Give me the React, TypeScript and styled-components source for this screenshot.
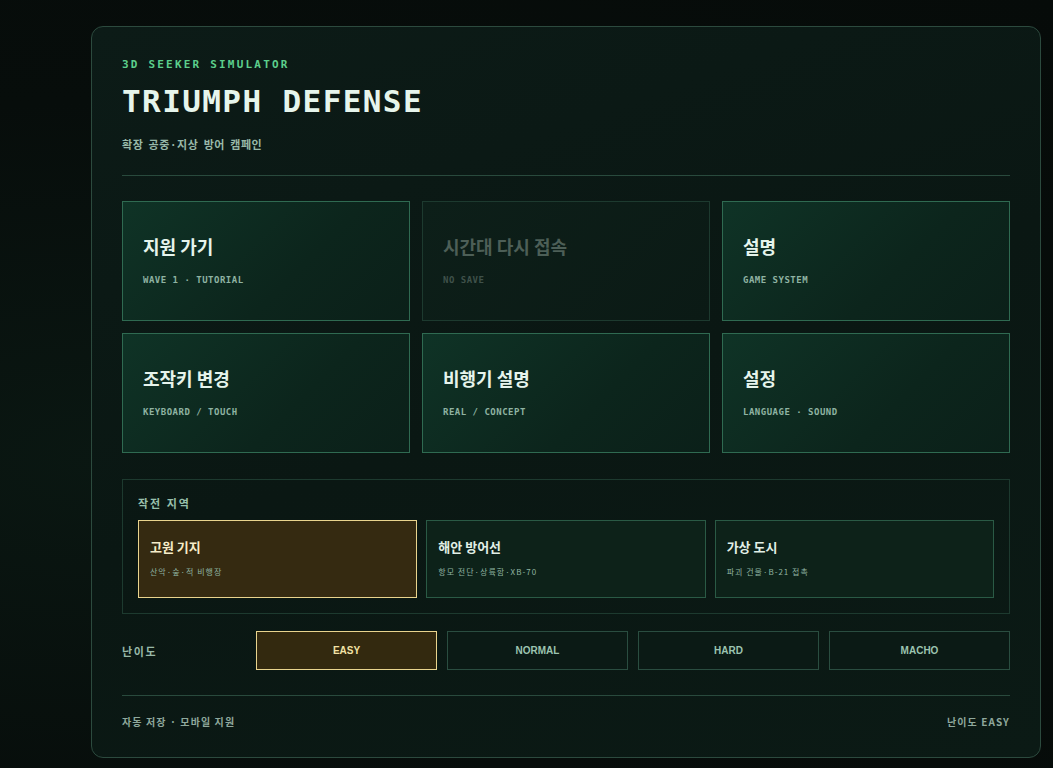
import React from "react";
import styled, { createGlobalStyle } from "styled-components";

const Global = createGlobalStyle`
  html, body { margin: 0; padding: 0; }
  body {
    background: radial-gradient(ellipse at 10% 60%, #0a1712 0%, #070d0b 55%, #060b09 100%);
    min-height: 768px;
    font-family: "Noto Sans CJK KR", "Noto Sans", sans-serif;
  }
`;

const Page = styled.div`
  padding: 26px 12px 10px 91px;
  box-sizing: border-box;
  min-height: 768px;
`;

const Panel = styled.div`
  width: 950px;
  height: 732px;
  box-sizing: border-box;
  border: 1px solid #2c4a3e;
  border-radius: 12px;
  background: linear-gradient(160deg, #0c1b17 0%, #0a1713 50%, #0b1a15 100%);
  padding: 31px 30px 0 30px;
  display: flex;
  flex-direction: column;
`;

const Kicker = styled.div`
  font-family: "DejaVu Sans Mono", monospace;
  font-weight: 700;
  font-size: 11px;
  letter-spacing: 2.2px;
  color: #5ccf8c;
  line-height: 14px;
`;

const Title = styled.h1`
  margin: 12px 0 0 0;
  font-family: "DejaVu Sans Mono", monospace;
  font-weight: 700;
  font-size: 31px;
  letter-spacing: 1.4px;
  color: #e6f5ec;
  line-height: 34px;
`;

const Subtitle = styled.div`
  margin-top: 19px;
  font-size: 11px;
  font-weight: 700;
  letter-spacing: 0.6px;
  word-spacing: 2px;
  color: #98b8a8;
  line-height: 14px;
`;

const Divider = styled.div<{ $top: number }>`
  margin-top: ${(p) => p.$top}px;
  height: 1px;
  background: #294a3d;
`;

const MenuGrid = styled.div`
  margin-top: 25px;
  display: grid;
  grid-template-columns: repeat(3, 1fr);
  grid-auto-rows: 120px;
  gap: 12px;
`;

const MenuCard = styled.div<{ $disabled?: boolean }>`
  box-sizing: border-box;
  border: 1px solid ${(p) => (p.$disabled ? "#1d3a2f" : "#2f6a51")};
  background: ${(p) =>
    p.$disabled
      ? "linear-gradient(135deg, #0d1f19 0%, #0b1a15 100%)"
      : "linear-gradient(135deg, #0f3326 0%, #0c251c 60%, #0b2019 100%)"};
  padding: 32px 20px 0 20px;
  display: flex;
  flex-direction: column;
`;

const CardTitle = styled.div<{ $disabled?: boolean }>`
  font-size: 18px;
  font-weight: 700;
  color: ${(p) => (p.$disabled ? "#4d5f57" : "#e6f4ec")};
  line-height: 24px;
`;

const CardSub = styled.div<{ $disabled?: boolean }>`
  margin-top: 16px;
  font-family: "DejaVu Sans Mono", monospace;
  font-weight: 700;
  font-size: 9px;
  letter-spacing: 0.5px;
  color: ${(p) => (p.$disabled ? "#3f514a" : "#8fb3a2")};
  line-height: 12px;
`;

const Section = styled.div`
  margin-top: 26px;
  border: 1px solid #1d3a2f;
  padding: 16px 15px 15px 15px;
`;

const SectionLabel = styled.div`
  font-size: 11px;
  font-weight: 700;
  letter-spacing: 2px;
  color: #98c0ac;
  line-height: 14px;
`;

const RegionRow = styled.div`
  margin-top: 10px;
  display: grid;
  grid-template-columns: repeat(3, 1fr);
  gap: 9px;
`;

const RegionCard = styled.div<{ $active?: boolean }>`
  box-sizing: border-box;
  height: 78px;
  border: 1px solid ${(p) => (p.$active ? "#e9d48e" : "#2a5a45")};
  background: ${(p) => (p.$active ? "#352a11" : "#0d2219")};
  padding: 17px 11px 0 11px;
`;

const RegionTitle = styled.div<{ $active?: boolean }>`
  font-size: 13px;
  font-weight: 700;
  color: ${(p) => (p.$active ? "#f6ecc8" : "#e1efe6")};
  line-height: 18px;
`;

const RegionSub = styled.div`
  margin-top: 10px;
  font-size: 8px;
  letter-spacing: 1px;
  color: #8fb3a0;
  line-height: 12px;
`;

const DiffRow = styled.div`
  margin-top: 17px;
  display: grid;
  grid-template-columns: 124px repeat(4, 1fr);
  gap: 10px;
  align-items: center;
`;

const DiffLabel = styled.div`
  font-size: 11px;
  font-weight: 700;
  letter-spacing: 1.6px;
  color: #98b8a8;
`;

const DiffButton = styled.div<{ $active?: boolean }>`
  box-sizing: border-box;
  height: 39px;
  display: flex;
  align-items: center;
  justify-content: center;
  border: 1px solid ${(p) => (p.$active ? "#e9d48e" : "#2a4d40")};
  background: ${(p) => (p.$active ? "#33290f" : "#0b1a15")};
  font-family: "Liberation Sans", Arial, sans-serif;
  font-weight: 700;
  font-size: 10px;
  color: ${(p) => (p.$active ? "#f3e3a6" : "#9cc4b0")};
`;

const Footer = styled.div`
  margin-top: 19px;
  display: flex;
  justify-content: space-between;
  align-items: center;
  font-size: 10px;
  font-weight: 700;
  letter-spacing: 1.1px;
  color: #8fa89c;
  line-height: 14px;
`;

const menu = [
  { t: "지원 가기", s: "WAVE 1 · TUTORIAL" },
  { t: "시간대 다시 접속", s: "NO SAVE", d: true },
  { t: "설명", s: "GAME SYSTEM" },
  { t: "조작키 변경", s: "KEYBOARD / TOUCH" },
  { t: "비행기 설명", s: "REAL / CONCEPT" },
  { t: "설정", s: "LANGUAGE · SOUND" },
];

const regions = [
  { t: "고원 기지", s: "산악·숲·적 비행장", a: true },
  { t: "해안 방어선", s: "항모 전단·상륙함·XB-70" },
  { t: "가상 도시", s: "파괴 건물·B-21 접촉" },
];

const diffs = ["EASY", "NORMAL", "HARD", "MACHO"];

export default function App() {
  return (
    <>
      <Global />
      <Page>
        <Panel>
          <Kicker>3D SEEKER SIMULATOR</Kicker>
          <Title>TRIUMPH DEFENSE</Title>
          <Subtitle>확장 공중·지상 방어 캠페인</Subtitle>
          <Divider $top={24} />
          <MenuGrid>
            {menu.map((m) => (
              <MenuCard key={m.t} $disabled={m.d}>
                <CardTitle $disabled={m.d}>{m.t}</CardTitle>
                <CardSub $disabled={m.d}>{m.s}</CardSub>
              </MenuCard>
            ))}
          </MenuGrid>
          <Section>
            <SectionLabel>작전 지역</SectionLabel>
            <RegionRow>
              {regions.map((r) => (
                <RegionCard key={r.t} $active={r.a}>
                  <RegionTitle $active={r.a}>{r.t}</RegionTitle>
                  <RegionSub>{r.s}</RegionSub>
                </RegionCard>
              ))}
            </RegionRow>
          </Section>
          <DiffRow>
            <DiffLabel>난이도</DiffLabel>
            {diffs.map((d, i) => (
              <DiffButton key={d} $active={i === 0}>
                {d}
              </DiffButton>
            ))}
          </DiffRow>
          <Divider $top={25} />
          <Footer>
            <span>자동 저장 · 모바일 지원</span>
            <span>난이도 EASY</span>
          </Footer>
        </Panel>
      </Page>
    </>
  );
}
